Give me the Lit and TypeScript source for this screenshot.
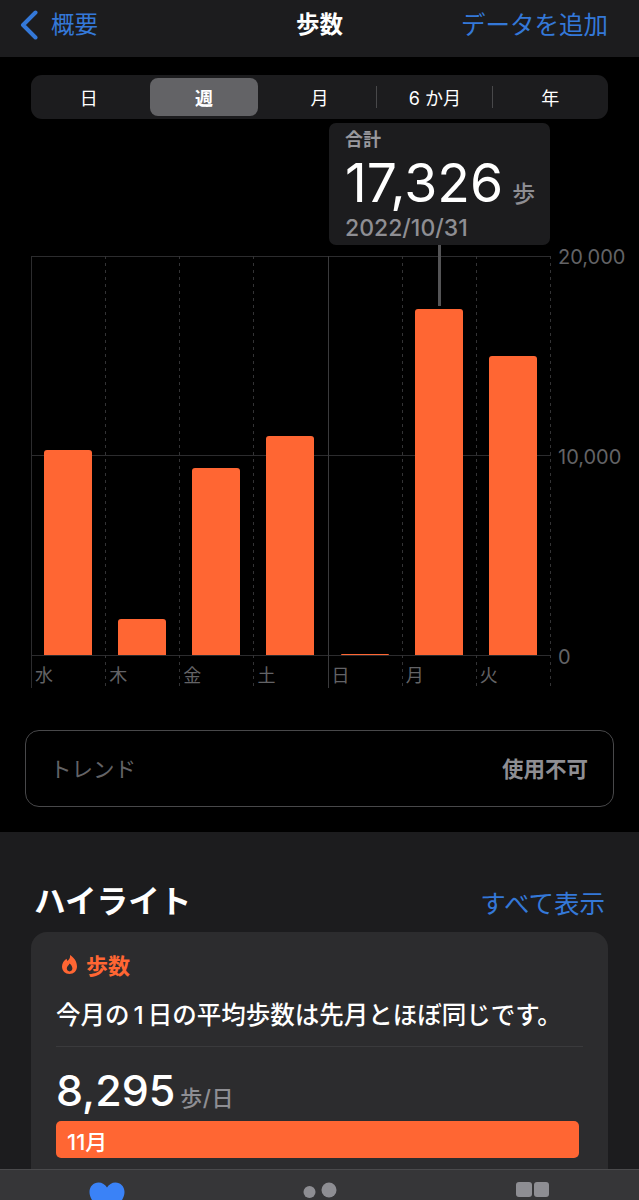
import { LitElement, css, html } from 'lit'
import { customElement } from 'lit/decorators.js'

const BASELINE = 655
const bars = [
  { day: '水', top: 450, line: 'edge' },
  { day: '木', top: 619, line: '' },
  { day: '金', top: 468, line: '' },
  { day: '土', top: 436, line: '' },
  { day: '日', top: 654, line: 'solid' },
  { day: '月', top: 309, line: '' },
  { day: '火', top: 356, line: '' },
]

@customElement('app-root')
export class AppRoot extends LitElement {
  static styles = css`
    :host {
      display: flex;
      flex-direction: column;
      height: 1200px;
      overflow: hidden;
      background: #000;
      color: #fff;
      font-family: Inter, "Noto Sans CJK JP", sans-serif;
    }
    * { box-sizing: border-box; }

    .nav {
      flex: none;
      height: 57px;
      background: #1c1c1e;
      display: grid;
      grid-template-columns: 1fr auto 1fr;
      align-items: center;
      padding: 0 31px 11px;
    }
    .back { display: flex; align-items: center; gap: 13px; margin-left: -11px; color: #3478d8; font-size: 23.5px; }
    .back svg { display: block; margin-top: 4px; }
    .title { font-size: 23.5px; font-weight: 700; }
    .add { justify-self: end; color: #3478d8; font-size: 24.5px; }

    .top { flex: none; height: 775px; padding-top: 18px; }

    .seg {
      display: grid;
      grid-template-columns: repeat(5, 1fr);
      height: 44px;
      margin: 0 31px;
      background: #1c1c1e;
      border-radius: 11px;
    }
    .cell {
      position: relative;
      display: flex;
      align-items: center;
      justify-content: center;
      font-size: 18px;
    }
    .cell.sep::after {
      content: '';
      position: absolute;
      right: 0;
      top: 11px;
      height: 22px;
      width: 1px;
      background: #48484a;
    }
    .cell.on {
      margin: 3px 4px;
      background: #636366;
      border-radius: 8px;
      font-weight: 700;
    }

    .chart { position: relative; height: 611px; padding: 137px 0 0 31px; display: flex; }
    .tip {
      position: absolute;
      left: 329px;
      top: 4px;
      width: 221px;
      height: 122px;
      padding: 3px 16px 0;
      background: #1c1c1e;
      border-radius: 7px;
    }
    .tip-label { font-size: 18px; line-height: 28px; font-weight: 600; color: #98989d; }
    .tip-value { display: flex; align-items: baseline; gap: 9px; height: 58px; line-height: 58px; font-size: 53.5px; font-weight: 400; white-space: nowrap; }
    .tip-unit { font-size: 23px; font-weight: 500; color: #8e8e93; }
    .tip-date { margin-top: 2px; font-size: 23px; line-height: 28px; font-weight: 500; color: #8e8e93; }
    .stem {
      position: absolute;
      left: 438px;
      top: 126px;
      width: 3px;
      height: 61px;
      background: #545456;
    }

    .plot { position: relative; flex: none; width: 520px; height: 432px; }
    .rule { position: absolute; left: 0; right: 0; height: 1px; background: #2c2c2e; }
    .rule.a { top: 0; }
    .rule.b { top: 199px; }
    .rule.c { top: 399px; }
    .cols { position: relative; display: grid; grid-template-columns: repeat(7, 74.14px); height: 100%; }
    .col {
      display: flex;
      flex-direction: column;
      background: repeating-linear-gradient(to bottom, #333335 0 3px, transparent 3px 7px) left top / 1px 100% no-repeat;
    }
    .col.edge { background: linear-gradient(#2c2c2e, #2c2c2e) left top / 1px 100% no-repeat; }
    .col.solid { background: linear-gradient(#3a3a3c, #3a3a3c) left top / 1px 100% no-repeat; }
    .bar-area { flex: none; height: 399px; display: flex; align-items: flex-end; justify-content: center; }
    .bar { width: 48px; background: #ff6633; border-radius: 3px 3px 0 0; }
    .day { padding: 10px 0 0 4px; font-size: 18px; line-height: 22px; color: #636366; }
    .end {
      position: absolute;
      right: 0;
      top: 0;
      width: 1px;
      height: 100%;
      background: repeating-linear-gradient(to bottom, #333335 0 3px, transparent 3px 7px);
    }

    .axis {
      flex: none;
      width: 80px;
      height: 428px;
      margin-top: -13px;
      padding-left: 7px;
      display: flex;
      flex-direction: column;
      justify-content: space-between;
      font-size: 20px;
      line-height: 28px;
      color: #636366;
    }

    .trend {
      display: flex;
      justify-content: space-between;
      align-items: center;
      height: 77px;
      margin: 0 25px;
      padding: 0 25px 3px 24px;
      border: 1.5px solid #48484a;
      border-radius: 14px;
      font-size: 21.5px;
      color: #636366;
    }
    .trend b { font-weight: 700; color: #8e8e93; }

    .lower { flex: 1; min-height: 0; overflow: hidden; background: #1c1c1e; padding: 48px 31px 0; }
    .head { display: flex; justify-content: space-between; align-items: baseline; height: 52px; padding: 0 3px; }
    .head h2 { margin: 0; font-size: 31.6px; font-weight: 700; line-height: 44px; }
    .head a { color: #3478d8; font-size: 25.5px; }
    .card { background: #2c2c2e; border-radius: 16px; padding: 18px 25px 20px; height: 280px; }
    .tag { display: flex; align-items: center; gap: 9px; height: 28px; color: #ff6633; font-size: 22px; font-weight: 700; padding-left: 6px; }
    .tag svg { display: block; }
    .msg { margin-top: 20px; font-size: 24.5px; line-height: 34px; font-weight: 500; white-space: nowrap; }
    .msg i { font-style: normal; margin: 0 4px; }
    .hr { height: 1px; margin-top: 14px; background: #3a3a3c; }
    .stat { display: flex; align-items: baseline; gap: 5px; height: 74px; padding-top: 12px; font-size: 43px; line-height: 62px; font-weight: 500; }
    .stat span { font-size: 22px; font-weight: 500; color: #8e8e93; letter-spacing: 0.5px; }
    .month {
      width: 523px;
      height: 37px;
      display: flex;
      align-items: center;
      padding-left: 11px;
      background: #ff6633;
      border-radius: 5px;
      font-size: 22px;
      font-weight: 500;
    }

    .tabs {
      flex: none;
      height: 31px;
      overflow: hidden;
      background: #363638;
      border-top: 1px solid #4a4a4c;
      display: grid;
      grid-template-columns: 213px 213px 213px;
      justify-items: center;
    }
    .tabs svg { display: block; margin-top: 12px; }
  `

  render() {
    return html`
      <div class="nav">
        <div class="back">
          <svg width="18" height="30" viewBox="0 0 18 30" fill="none">
            <path d="M15.5 2.5 3 15l12.5 12.5" stroke="#3478d8" stroke-width="4" stroke-linecap="round" stroke-linejoin="round" />
          </svg>
          概要
        </div>
        <div class="title">歩数</div>
        <div class="add">データを追加</div>
      </div>

      <div class="top">
        <div class="seg">
          <div class="cell">日</div>
          <div class="cell on">週</div>
          <div class="cell sep">月</div>
          <div class="cell sep">6 か月</div>
          <div class="cell">年</div>
        </div>

        <div class="chart">
          <div class="plot">
            <div class="rule a"></div>
            <div class="rule b"></div>
            <div class="rule c"></div>
            <div class="cols">
              ${bars.map(b => html`
                <div class="col ${b.line}">
                  <div class="bar-area"><div class="bar" style="height:${BASELINE - b.top}px"></div></div>
                  <div class="day">${b.day}</div>
                </div>
              `)}
            </div>
            <div class="end"></div>
          </div>
          <div class="axis"><div>20,000</div><div>10,000</div><div>0</div></div>
          <div class="tip">
            <div class="tip-label">合計</div>
            <div class="tip-value">17,326<span class="tip-unit">歩</span></div>
            <div class="tip-date">2022/10/31</div>
          </div>
          <div class="stem"></div>
        </div>

        <div class="trend"><span>トレンド</span><b>使用不可</b></div>
      </div>

      <div class="lower">
        <div class="head"><h2>ハイライト</h2><a>すべて表示</a></div>
        <div class="card">
          <div class="tag">
            <svg width="15" height="19" viewBox="0 0 15 19">
              <path fill="#ff6633" fill-rule="evenodd" d="M8 0C8.500 3 7 4.500 5.500 6 5 5.200 4.600 4.500 4.500 3.800 2 5.600 0 8.400 0 11.500 0 16 3.300 19 7.500 19S15 16 15 11.500C15 6.500 12 2.500 8 0ZM7.600 16.400C6 16.400 4.800 15.200 4.800 13.600 4.800 11.800 6.400 10.700 7.600 8.600 9.200 10 10.400 11.800 10.400 13.600 10.400 15.200 9.200 16.400 7.600 16.400Z" />
            </svg>
            歩数
          </div>
          <div class="msg">今月の<i>1</i>日の平均歩数は先月とほぼ同じです。</div>
          <div class="hr"></div>
          <div class="stat">8,295<span>歩/日</span></div>
          <div class="month">11月</div>
        </div>
      </div>

      <div class="tabs">
        <svg width="36" height="32" viewBox="0 0 36 32">
          <path fill="#3a82f7" d="M18 32C8 25 .5 18 .5 10 .5 4.500 4.500.5 9.500.5c3.600 0 6.800 2 8.500 5 1.700-3 4.900-5 8.500-5 5 0 9 4 9 9.500 0 8-7.500 15-17.500 22Z" />
        </svg>
        <svg width="34" height="18" viewBox="0 0 34 18">
          <circle cx="6.500" cy="10" r="6" fill="#8e8e93" />
          <circle cx="26" cy="8" r="7.500" fill="#8e8e93" />
        </svg>
        <svg width="34" height="16" viewBox="0 0 34 16">
          <rect x="0" y="0" width="16" height="15" rx="3" fill="#8e8e93" />
          <rect x="18" y="0" width="15" height="15" rx="3" fill="#8e8e93" />
        </svg>
      </div>
    `
  }
}
